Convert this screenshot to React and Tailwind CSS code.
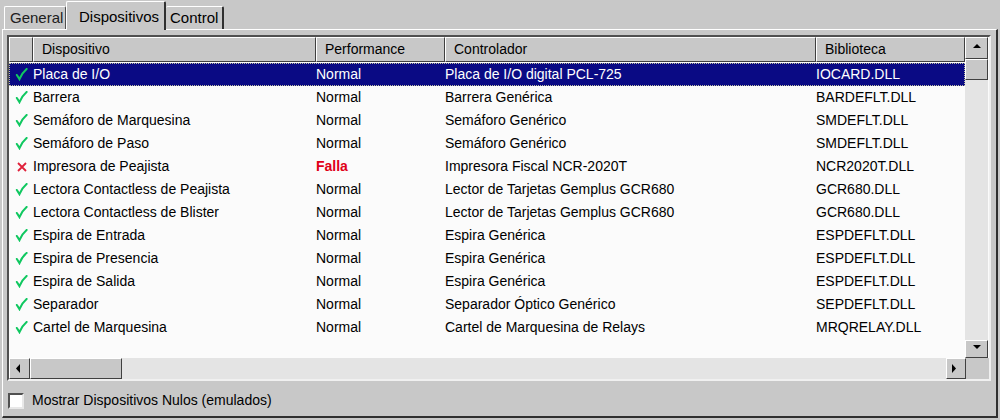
import React from 'react'

const rows = [
  { ok: true, name: 'Placa de I/O', perf: 'Normal', ctrl: 'Placa de I/O digital PCL-725', lib: 'IOCARD.DLL' },
  { ok: true, name: 'Barrera', perf: 'Normal', ctrl: 'Barrera Genérica', lib: 'BARDEFLT.DLL' },
  { ok: true, name: 'Semáforo de Marquesina', perf: 'Normal', ctrl: 'Semáforo Genérico', lib: 'SMDEFLT.DLL' },
  { ok: true, name: 'Semáforo de Paso', perf: 'Normal', ctrl: 'Semáforo Genérico', lib: 'SMDEFLT.DLL' },
  { ok: false, name: 'Impresora de Peajista', perf: 'Falla', ctrl: 'Impresora Fiscal NCR-2020T', lib: 'NCR2020T.DLL' },
  { ok: true, name: 'Lectora Contactless de Peajista', perf: 'Normal', ctrl: 'Lector de Tarjetas Gemplus GCR680', lib: 'GCR680.DLL' },
  { ok: true, name: 'Lectora Contactless de Blister', perf: 'Normal', ctrl: 'Lector de Tarjetas Gemplus GCR680', lib: 'GCR680.DLL' },
  { ok: true, name: 'Espira de Entrada', perf: 'Normal', ctrl: 'Espira Genérica', lib: 'ESPDEFLT.DLL' },
  { ok: true, name: 'Espira de Presencia', perf: 'Normal', ctrl: 'Espira Genérica', lib: 'ESPDEFLT.DLL' },
  { ok: true, name: 'Espira de Salida', perf: 'Normal', ctrl: 'Espira Genérica', lib: 'ESPDEFLT.DLL' },
  { ok: true, name: 'Separador', perf: 'Normal', ctrl: 'Separador Óptico Genérico', lib: 'SEPDEFLT.DLL' },
  { ok: true, name: 'Cartel de Marquesina', perf: 'Normal', ctrl: 'Cartel de Marquesina de Relays', lib: 'MRQRELAY.DLL' },
]

const raised = 'border border-t-white border-l-white border-r-[#404040] border-b-[#404040] bg-[#c8c8c8]'

function Check() {
  return (
    <svg width="13" height="13" viewBox="0 0 14 14">
      <path d="M2 7.5 L4.8 12 C6.5 7.5 9 4 12.5 1" fill="none" stroke="#10c860" strokeWidth="2.2" strokeLinecap="round" />
    </svg>
  )
}

function Cross() {
  return (
    <svg width="12" height="12" viewBox="0 0 12 12">
      <path d="M2 2 L10 10 M10 2 L2 10" stroke="#e0203a" strokeWidth="1.8" />
    </svg>
  )
}

function Arrow({ dir }) {
  const pts = {
    up: '1,5 5,1 9,5',
    down: '1,1 5,5 9,1',
    left: '5,0 1,4.5 5,9',
    right: '1,0 5,4.5 1,9',
  }[dir]
  return (
    <svg width="10" height="10" viewBox="0 0 10 10">
      <polygon points={pts} fill="#000" />
    </svg>
  )
}

function Header({ w, children }) {
  return (
    <div className={`${raised} h-[25px] flex items-center pl-[8px] shrink-0`} style={{ width: w }}>
      {children}
    </div>
  )
}

export default function App() {
  return (
    <div
      className="w-[1000px] h-[420px] bg-[#c8c8c8] text-black text-[14px] flex flex-col overflow-hidden"
      style={{ fontFamily: '"Liberation Sans", Arial, sans-serif' }}
    >
      {/* Tabs */}
      <div className="flex items-end h-[29px] pl-[4px] text-[15px]">
        <div className="h-[23px] w-[62px] border-t border-l border-white border-r border-r-[#505050] rounded-t-[2px] flex items-center pl-[5px] text-[#202020]">
          General
        </div>
        <div className="h-[29px] w-[100px] border-t border-l border-white border-r-2 border-r-[#303030] rounded-t-[2px] flex items-start pt-[4px] pl-[12px] bg-[#c8c8c8] relative z-10 -mb-px">
          Dispositivos
        </div>
        <div className="h-[23px] w-[58px] border-t border-white border-r-2 border-r-[#303030] rounded-t-[2px] flex items-center pl-[4px]">
          Control
        </div>
      </div>

      {/* Panel */}
      <div className="flex-1 mx-[2px] mb-[2px] border-t border-l border-white border-r-2 border-b-2 border-r-[#303030] border-b-[#303030] flex flex-col px-[4px] pt-[5px]">
        {/* List view */}
        <div className="w-[984px] h-[346px] border-2 border-t-[#505050] border-l-[#505050] border-r-[#f0f0f0] border-b-[#f0f0f0] flex flex-col bg-[#fbfbfb]">
          <div className="flex flex-1 min-h-0">
            <div className="w-[956px] flex flex-col">
              <div className="flex">
                <Header w={24} />
                <Header w={283}>Dispositivo</Header>
                <Header w={129}>Performance</Header>
                <Header w={371}>Controlador</Header>
                <Header w={149}>Biblioteca</Header>
              </div>
              <div className="flex flex-col pt-px">
                {rows.map((r, i) => {
                  const sel = i === 0
                  return (
                    <div
                      key={i}
                      className={`flex h-[23px] items-center ${sel ? 'bg-[#0a0a84] text-white outline-1 outline-dotted outline-[#c0c0a0] -outline-offset-1' : ''}`}
                    >
                      <div className="w-[24px] flex justify-center pl-[1px] shrink-0">
                        {r.ok ? <Check /> : <Cross />}
                      </div>
                      <div className="w-[283px] shrink-0">{r.name}</div>
                      <div className={`w-[129px] shrink-0 ${r.ok ? '' : 'text-[#e00018] font-bold'}`}>{r.perf}</div>
                      <div className="w-[371px] shrink-0">{r.ctrl}</div>
                      <div className="w-[149px] shrink-0">{r.lib}</div>
                    </div>
                  )
                })}
              </div>
            </div>
            {/* Vertical scrollbar */}
            <div className="w-[23px] flex flex-col bg-[#e4e4e4]">
              <div className={`${raised} h-[22px] flex items-center justify-center`}>
                <Arrow dir="up" />
              </div>
              <div className={`${raised} h-[21px]`} />
              <div className="flex-1" />
              <div className={`${raised} h-[18px] flex items-center justify-center`}>
                <Arrow dir="down" />
              </div>
            </div>
          </div>
          {/* Horizontal scrollbar */}
          <div className="flex h-[21px] bg-[#e4e4e4]">
            <div className={`${raised} w-[21px] flex items-center justify-center`}>
              <Arrow dir="left" />
            </div>
            <div className={`${raised} w-[92px]`} />
            <div className="flex-1" />
            <div className={`${raised} w-[20px] flex items-center justify-center`}>
              <Arrow dir="right" />
            </div>
            <div className="w-[23px] bg-[#c8c8c8]" />
          </div>
        </div>

        {/* Checkbox */}
        <div className="flex items-center gap-[8px] mt-[9px] pl-[1px]">
          <div className="w-[16px] h-[16px] bg-white border-2 border-t-[#505050] border-l-[#505050] border-r-[#e8e8e8] border-b-[#e8e8e8]" />
          <span>Mostrar Dispositivos Nulos (emulados)</span>
        </div>
      </div>
    </div>
  )
}
